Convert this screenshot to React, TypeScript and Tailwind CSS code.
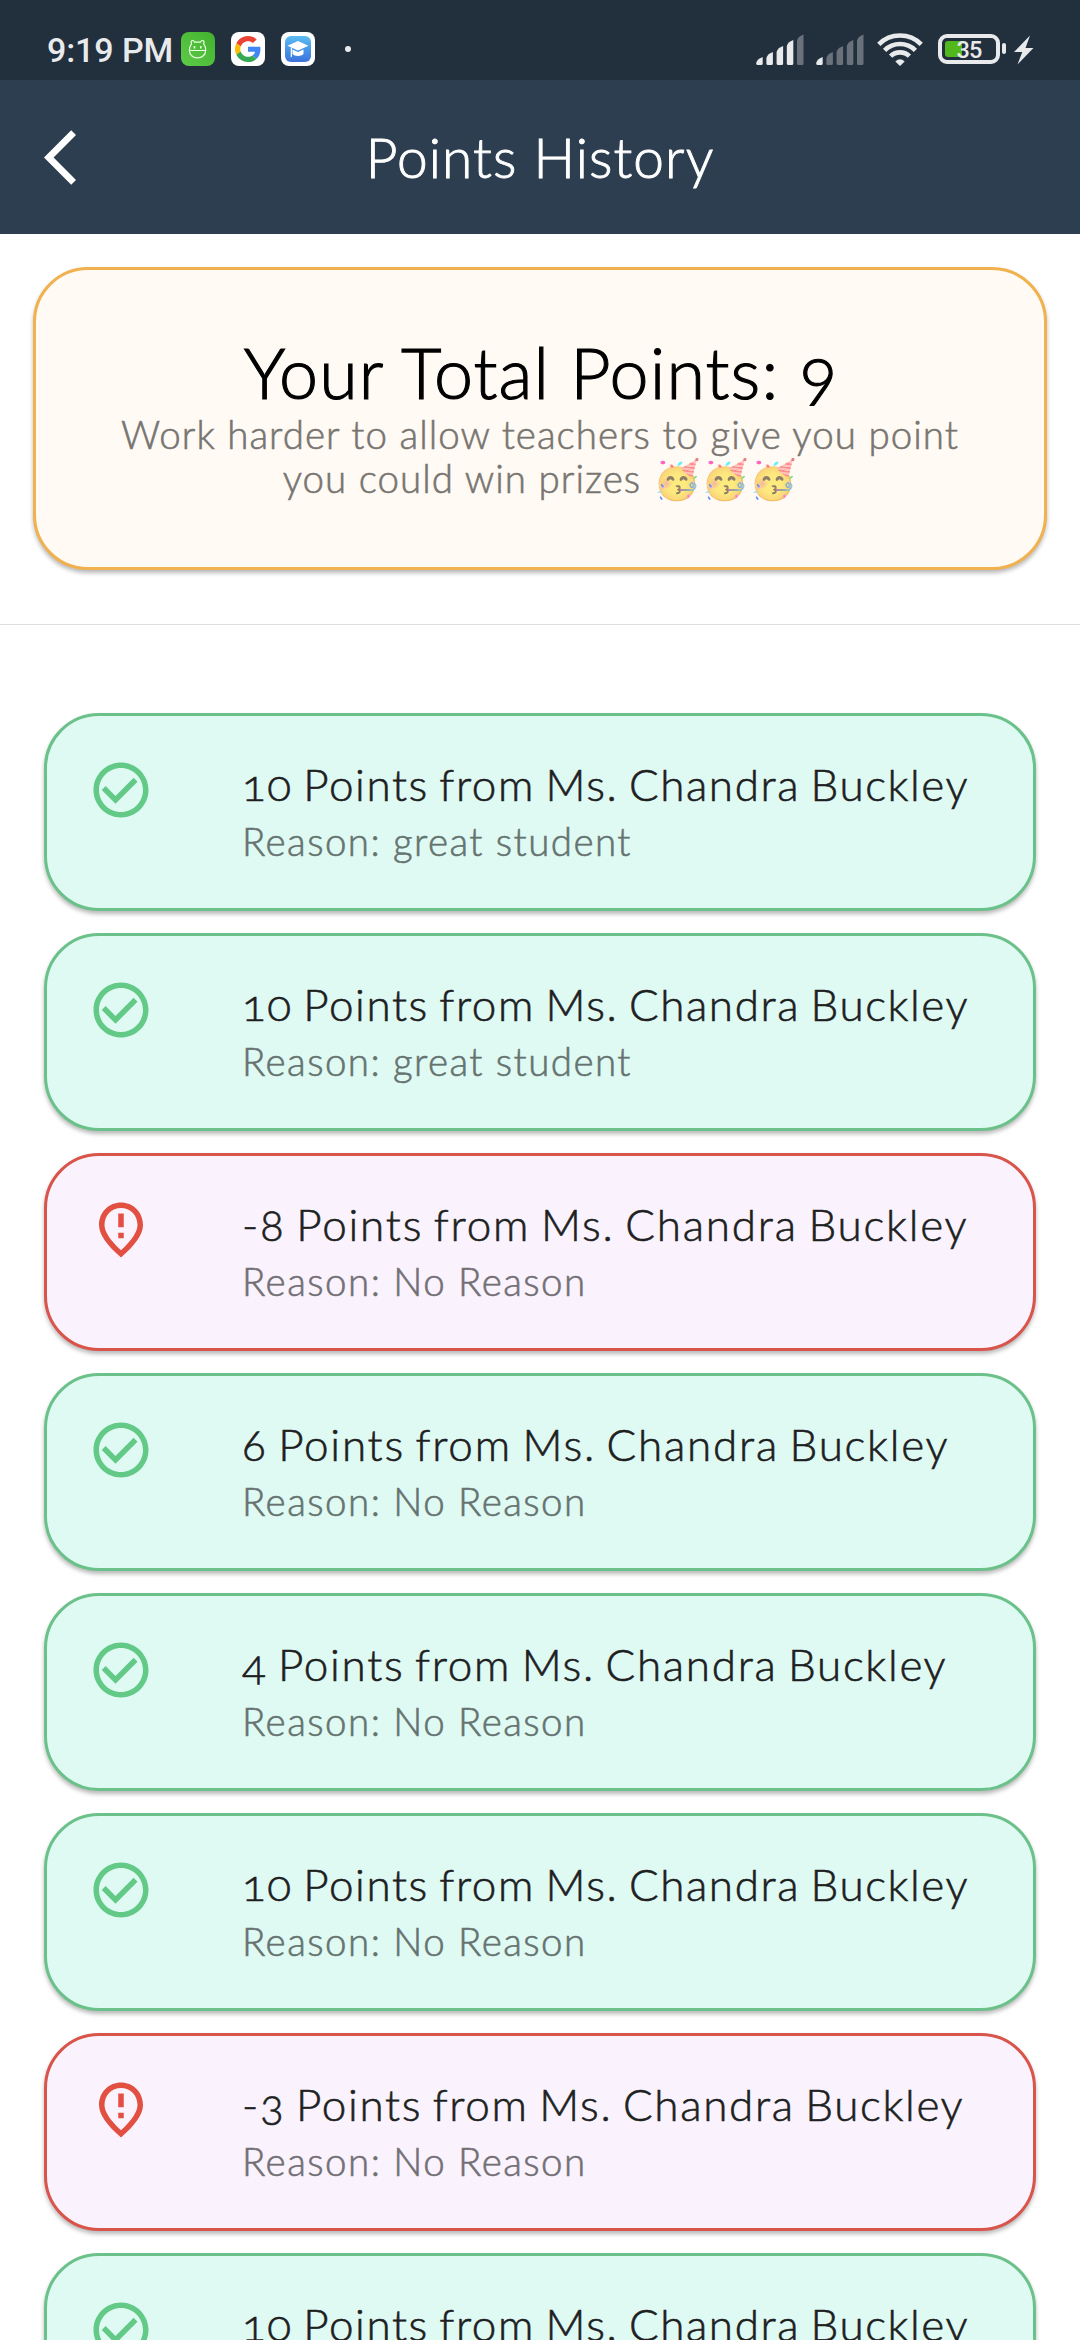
import type { ReactNode } from "react";

type Entry = { points: number; teacher: string; reason: string; spacing: string; subSpacing: string };

const entries: Entry[] = [
  { points: 10, teacher: "Ms. Chandra Buckley", reason: "great student", spacing: "tracking-[1.58px]", subSpacing: "tracking-[1.42px]" },
  { points: 10, teacher: "Ms. Chandra Buckley", reason: "great student", spacing: "tracking-[1.58px]", subSpacing: "tracking-[1.42px]" },
  { points: -8, teacher: "Ms. Chandra Buckley", reason: "No Reason", spacing: "tracking-[1.78px]", subSpacing: "tracking-[1.46px]" },
  { points: 6, teacher: "Ms. Chandra Buckley", reason: "No Reason", spacing: "tracking-[1.75px]", subSpacing: "tracking-[1.46px]" },
  { points: 4, teacher: "Ms. Chandra Buckley", reason: "No Reason", spacing: "tracking-[1.69px]", subSpacing: "tracking-[1.46px]" },
  { points: 10, teacher: "Ms. Chandra Buckley", reason: "No Reason", spacing: "tracking-[1.58px]", subSpacing: "tracking-[1.46px]" },
  { points: -3, teacher: "Ms. Chandra Buckley", reason: "No Reason", spacing: "tracking-[1.66px]", subSpacing: "tracking-[1.46px]" },
  { points: 10, teacher: "Ms. Chandra Buckley", reason: "No Reason", spacing: "tracking-[1.58px]", subSpacing: "tracking-[1.46px]" },
];

function CheckIcon() {
  return (
    <svg viewBox="0 0 24 24" className="size-[66px] shrink-0" fill="#62c986">
      <path d="M16.59 7.58 10 14.17l-3.59-3.58L5 12l5 5 8-8zM12 2C6.48 2 2 6.48 2 12s4.48 10 10 10 10-4.48 10-10S17.52 2 12 2zm0 18c-4.42 0-8-3.58-8-8s3.58-8 8-8 8 3.58 8 8-3.58 8-8 8z" />
    </svg>
  );
}

function BadIcon() {
  return (
    <svg viewBox="0 0 24 24" className="size-[66px] shrink-0" fill="#e25041">
      <path d="M12 2c-4.2 0-8 3.22-8 8.2 0 3.32 2.67 7.25 8 11.8 5.33-4.55 8-8.48 8-11.8C20 5.22 16.2 2 12 2zm0 17.33c-4.05-3.7-6-6.79-6-9.14C6 6.57 8.65 4 12 4s6 2.57 6 6.2c0 2.34-1.95 5.44-6 9.13zM13 11h-2V6h2v5zm0 4h-2v-2h2v2z" />
    </svg>
  );
}

function Signal({ level }: { level: number }) {
  return (
    <svg viewBox="0 0 48 32" className="h-8 w-12" fill="#e8eaec">
      {[23, 18, 12, 6, 0.5].map((top, i) => (
        <path
          key={i}
          opacity={i < level ? 1 : 0.36}
          d={`M${i * 10.2 + 0.2} ${top + 6}Q${i * 10.2 + 1} ${top + 2} ${i * 10.2 + 6.7} ${top}V29.5Q${i * 10.2 + 6.7} 31 ${i * 10.2 + 5.2} 31H${i * 10.2 + 1.7}Q${i * 10.2 + 0.2} 31 ${i * 10.2 + 0.2} 29.5Z`}
        />
      ))}
    </svg>
  );
}

function AppBadge({ className, children }: { className: string; children: ReactNode }) {
  return <div className={`flex size-[34px] items-center justify-center rounded-lg ${className}`}>{children}</div>;
}

function StatusBar() {
  return (
    <div className="flex h-20 shrink-0 items-start bg-[#222f3c] text-[#e8eaec] [font-feature-settings:normal]">
      <div className="mt-[30px] ml-[47px] w-[134px] whitespace-nowrap font-['Roboto'] text-[34px] leading-10 font-medium tracking-[-0.1px]">
        9:19 PM
      </div>
      <div className="mt-8 flex gap-4">
        <AppBadge className="bg-linear-to-tr from-[#5ecb48] to-[#41b22e]">
          <svg viewBox="0 0 34 34" className="size-[34px]" fill="none" stroke="#eaffe4" strokeWidth="1.2">
            <path d="M10.5 11.8C9.6 9.6 10.5 8.5 11.8 8.5c1 0 1.5.8 1.8 1.7h6c.3-.9.8-1.7 1.8-1.7 1.3 0 2.2 1.1 1.3 3.3 1.2 1.6 2 4 2 6.2 0 5-3.5 7.8-8.2 7.8S8.4 23 8.4 18c0-2.2.9-4.6 2.1-6.2zM8.6 18.5h16" />
            <path d="M13.5 14v2.6M19.8 14v2.6" strokeWidth="1.6" />
          </svg>
        </AppBadge>
        <AppBadge className="bg-white">
          <svg viewBox="0 0 48 48" className="size-[26px]">
            <path fill="#EA4335" d="M24 9.5c3.54 0 6.71 1.22 9.21 3.6l6.85-6.85C35.9 2.38 30.47 0 24 0 14.62 0 6.51 5.38 2.56 13.22l7.98 6.19C12.43 13.72 17.74 9.5 24 9.5z" />
            <path fill="#4285F4" d="M46.98 24.55c0-1.57-.15-3.09-.38-4.55H24v9.02h12.94c-.58 2.96-2.26 5.48-4.78 7.18l7.73 6c4.51-4.18 7.09-10.36 7.09-17.65z" />
            <path fill="#FBBC05" d="M10.53 28.59c-.48-1.45-.76-2.99-.76-4.59s.27-3.14.76-4.59l-7.98-6.19C.92 16.46 0 20.12 0 24c0 3.88.92 7.54 2.56 10.78l7.97-6.19z" />
            <path fill="#34A853" d="M24 48c6.48 0 11.93-2.13 15.89-5.81l-7.73-6c-2.15 1.45-4.92 2.3-8.16 2.3-6.26 0-11.57-4.22-13.47-9.91l-7.98 6.19C6.51 42.62 14.62 48 24 48z" />
          </svg>
        </AppBadge>
        <AppBadge className="bg-white">
          <div className="flex size-[26px] items-center justify-center rounded-md bg-linear-to-b from-[#5cbcf0] to-[#3d72dc]">
            <svg viewBox="0 0 24 24" className="size-6" fill="#fff">
              <path d="M12 4 1.5 8.8 12 13.6 22.5 8.8zM6.5 12.6v4.4c2 2.6 9 2.6 11 0v-4.4L12 15zM4.8 10.8h1.2V19.5l-1.3 1z" />
            </svg>
          </div>
        </AppBadge>
      </div>
      <div className="mt-[46px] ml-[30px] size-1.5 rounded-full bg-[#e8eaec]" />
      <div className="mt-[34px] ml-auto flex gap-3">
        <Signal level={4} />
        <Signal level={1} />
      </div>
      <svg viewBox="0 0 46 34" className="mt-8 ml-[13px] h-[34px] w-[46px]" fill="none" stroke="#e8eaec" strokeWidth="4.6">
        <path d="M1.8 12.3a30 30 0 0 1 42.4 0" />
        <path d="M7.6 18.3a22 22 0 0 1 30.8 0" />
        <path d="M13.6 24.2a13.5 13.5 0 0 1 18.8 0" />
        <path d="M18.3 29.5q4.7-4.6 9.4 0L23 34z" fill="#e8eaec" stroke="none" />
      </svg>
      <div className="mt-[34px] ml-[15px] grid h-[30px] w-[62px] grid-cols-1 grid-rows-1 rounded-[9px] border-4 border-[#e8eaec]">
        <div className="col-start-1 row-start-1 mt-[3px] ml-[3px] h-4 w-[17px] rounded-l-[3px] bg-[#53b81b]" />
        <div className="z-10 col-start-1 row-start-1 text-center font-['Roboto'] text-[23.5px] leading-6 font-medium tracking-[-0.8px]">
          35
        </div>
      </div>
      <div className="mt-[43px] ml-0.5 h-[11px] w-1 rounded-sm bg-[#e8eaec]" />
      <svg viewBox="0 0 20 30" className="mt-[34.5px] mr-[46px] ml-2 h-[30px] w-5" fill="#e8eaec">
        <path d="M16 .5 0 17h8.3L3.5 29.5 19.5 13h-8z" />
      </svg>
    </div>
  );
}

function Header() {
  return (
    <header className="grid h-[154px] shrink-0 grid-cols-[76px_1fr_76px] items-start bg-[#2d3e50]">
      <svg viewBox="0 0 32 55" className="mt-[49.5px] ml-11 h-[55px] w-8" fill="#fff">
        <path d="M27.2.2 32 5 9.6 27.5 32 50l-4.8 4.8L0 27.5z" />
      </svg>
      <h1 className="mt-11 text-center text-[55px] leading-[66px] font-light tracking-[1.1px] text-white [-webkit-text-stroke:0.9px_#fff]">
        Points History
      </h1>
    </header>
  );
}

function TotalCard() {
  return (
    <section className="mx-[33px] mt-[33px] h-[303px] shrink-0 rounded-[55px] border-3 border-[#f0b14e] bg-[#fffaf4] text-center whitespace-nowrap shadow-[0_3px_4px_rgba(0,0,0,0.28)]">
      <h2 className="mt-[60px] pl-0.5 text-[70px] leading-[84px] font-light tracking-[1.08px] text-black [-webkit-text-stroke:1.1px_#000]">
        Your Total Points: 9
      </h2>
      <p className="mt-[-2px] text-[38.5px] leading-[44px] font-light tracking-[1.03px] text-[#787571] [-webkit-text-stroke:0.6px_#787571]">
        Work harder to allow teachers to give you point
        <br />
        you could win prizes{" "}
        <span className="tracking-[0.2px] opacity-60 [-webkit-text-stroke:0px]">🥳🥳🥳</span>
      </p>
    </section>
  );
}

function EntryCard({ entry }: { entry: Entry }) {
  const good = entry.points > 0;
  return (
    <li
      className={`flex h-[198px] shrink-0 items-start rounded-[55px] border-3 whitespace-nowrap shadow-[0_3px_4px_rgba(0,0,0,0.28)] ${
        good ? "border-[#6ac189] bg-[#dffaf3]" : "border-[#d9544a] bg-[#faf3fe]"
      }`}
    >
      <div className="mt-[41px] ml-[41px] w-[153px]">{good ? <CheckIcon /> : <BadIcon />}</div>
      <div>
        <p
          className={`mt-[41px] ml-px text-[44px] leading-[54px] font-light [-webkit-text-stroke:0.6px] [word-spacing:-3px] ${
            good ? "text-[#1d201f]" : "text-[#201f21]"
          } ${entry.spacing}`}
        >
          {entry.points} Points from {entry.teacher}
        </p>
        <p
          className={`mt-[7px] ml-px text-[38.5px] leading-[46px] font-light [-webkit-text-stroke:0.6px] ${
            good ? "text-[#667370]" : "text-[#737075]"
          } ${entry.subSpacing}`}
        >
          Reason: {entry.reason}
        </p>
      </div>
    </li>
  );
}

export default function App() {
  return (
    <div className="flex h-[2340px] w-[1080px] flex-col overflow-hidden bg-white font-['Lato',sans-serif] [font-feature-settings:'onum'_1]">
      <StatusBar />
      <Header />
      <TotalCard />
      <div className="mt-[54px] h-px shrink-0 bg-[#dedede]" />
      <ul className="mx-11 mt-22 flex flex-col gap-[22px]">
        {entries.map((entry, i) => (
          <EntryCard key={i} entry={entry} />
        ))}
      </ul>
    </div>
  );
}
